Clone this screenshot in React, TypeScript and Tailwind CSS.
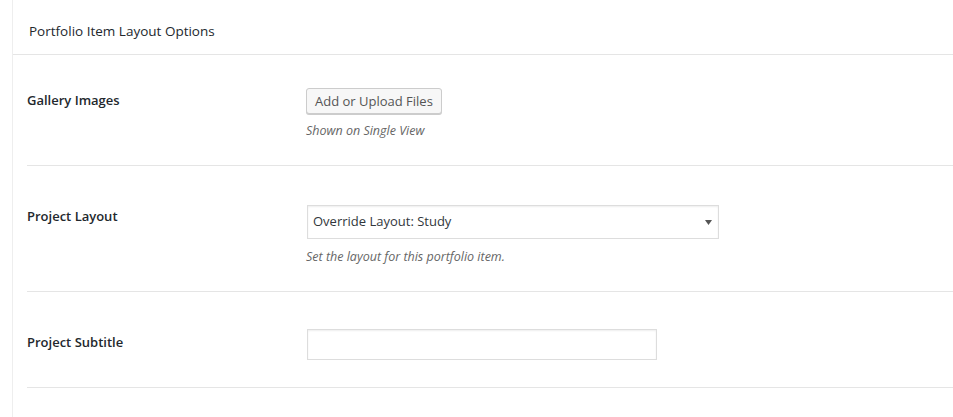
import { ReactNode } from "react";

const font = { fontFamily: '"Open Sans", "Noto Sans", "Liberation Sans", sans-serif' };

function Row({ label, labelPt, ctlPt, pb, children }: { label: string; labelPt: string; ctlPt: string; pb: string; children: ReactNode }) {
  return (
    <div className={`flex border-b border-[#e5e5e5] ${pb}`}>
      <div className={`w-[279px] shrink-0 ${labelPt}`}>
        <p className="text-[13px] leading-5 font-semibold text-[#23282d]">{label}</p>
      </div>
      <div className={`flex-1 ${ctlPt}`}>{children}</div>
    </div>
  );
}

export default function App() {
  return (
    <div className="w-[953px] h-[417px] bg-white overflow-hidden" style={font}>
      <div className="ml-[12px] h-full border-l border-[#eeeeee]">
        <div className="h-[55px] border-b border-[#e5e5e5] pt-[21px] pl-[16px]">
          <h2 className="text-[13.5px] leading-5 font-normal text-[#23282d]">Portfolio Item Layout Options</h2>
        </div>
        <div className="ml-[14px]">
          <Row label="Gallery Images" labelPt="pt-[35px]" ctlPt="pt-[33px]" pb="pb-[25px]">
            <button className="h-[26px] px-[8px] rounded-[3px] border border-[#cccccc] bg-[#f7f7f7] shadow-[0_1px_0_#cccccc] text-[13px] leading-[24px] text-[#555555]">
              Add or Upload Files
            </button>
            <p className="mt-[8px] text-[12.5px] leading-[18px] italic text-[#666666]">Shown on Single View</p>
          </Row>
          <Row label="Project Layout" labelPt="pt-[40px]" ctlPt="pt-[39px]" pb="pb-[25px]">
            <div className="ml-[1px] w-[412px] h-[34px] border border-[#dddddd] bg-white shadow-[inset_0_1px_2px_rgba(0,0,0,0.07)] flex items-center justify-between pl-[5px] pr-[6px]">
              <span className="text-[13px] text-[#32373c]">Override Layout: Study</span>
              <svg width="7" height="5" viewBox="0 0 7 5">
                <path d="M0 0 H7 L3.5 5 Z" fill="#555555" />
              </svg>
            </div>
            <p className="mt-[9px] text-[12.5px] leading-[18px] italic text-[#666666]">Set the layout for this portfolio item.</p>
          </Row>
          <Row label="Project Subtitle" labelPt="pt-[40px]" ctlPt="pt-[37px]" pb="pb-[27px]">
            <input
              type="text"
              className="block ml-[1px] w-[350px] h-[31px] border border-[#dddddd] bg-white shadow-[inset_0_1px_2px_rgba(0,0,0,0.07)] outline-none"
            />
          </Row>
        </div>
      </div>
    </div>
  );
}
